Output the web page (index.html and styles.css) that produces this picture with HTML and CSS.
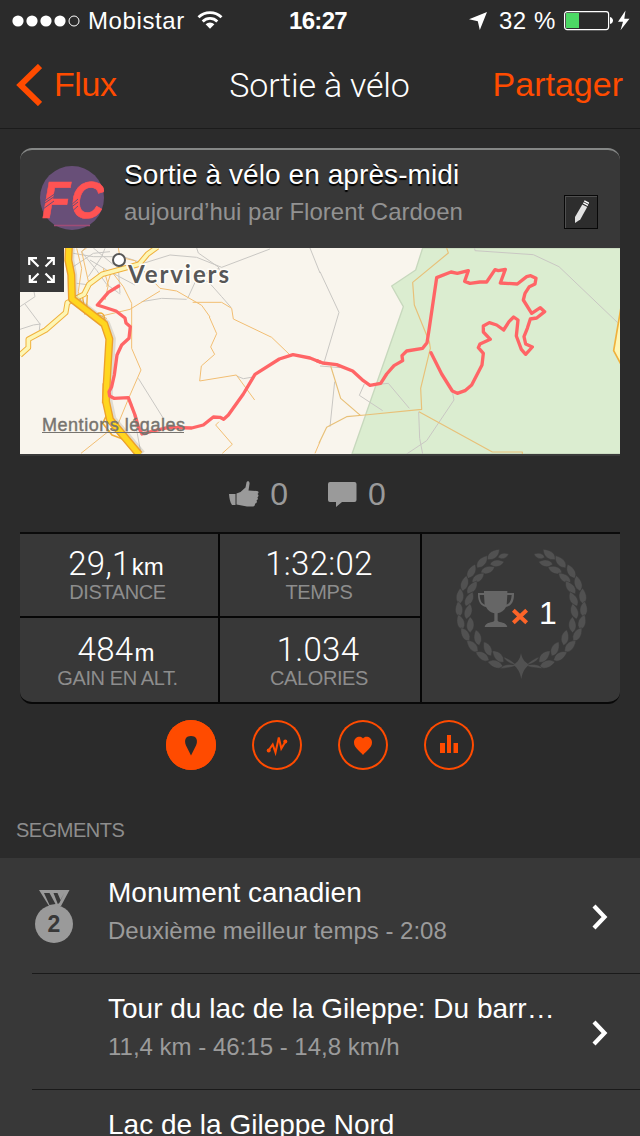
FILE: index.html
```
<!DOCTYPE html>
<html lang="fr">
<head>
<meta charset="utf-8">
<title>Sortie à vélo</title>
<link rel="stylesheet" href="styles.css">
</head>
<body>
<div class="screen">
  <header class="status">
    <div class="status-left">
      <svg class="signal" width="68" height="12" viewBox="0 0 68 12"><g fill="#fff"><circle cx="6" cy="6" r="5.6"/><circle cx="20" cy="6" r="5.6"/><circle cx="34" cy="6" r="5.6"/><circle cx="48" cy="6" r="5.6"/></g><circle cx="62" cy="6" r="5" fill="none" stroke="#fff"/></svg>
      <span class="carrier">Mobistar</span>
      <svg class="wifi" width="26" height="20" viewBox="0 0 26 20"><g fill="none" stroke="#fff" stroke-width="2.8"><path d="M1.5 6.200a16.6 16.6 0 0 1 23 0"/><path d="M5.7 10.400a10.5 10.5 0 0 1 14.6 0"/></g><path d="M8.600 13.200a6.400 6.400 0 0 1 8.800 0L13 17.700z" fill="#fff"/></svg>
    </div>
    <span class="clock">16:27</span>
    <div class="status-right">
      <svg width="20" height="20" viewBox="0 0 20 20"><path d="M19 1 11.800 19 9.800 10.200 1 8.300z" fill="#fff"/></svg>
      <span class="percent">32 %</span>
      <svg class="battery" width="66" height="22" viewBox="0 0 66 22"><rect x=".6" y="1.600" width="44" height="18" rx="2.500" fill="none" stroke="#fff" stroke-width="1.200"/><path d="M2 3h13v15H2z" fill="#4cd964"/><path d="M46 7c4 1 4 6 0 7z" fill="#fff"/><path d="m61.500 .5-7.500 11.200h5l-2.500 8.500 9-11.500h-5.200z" fill="#fff"/></svg>
    </div>
  </header>

  <nav class="nav">
    <span class="back"><svg width="26" height="42" viewBox="0 0 26 42"><path d="M24 2 4.500 21 24 40" fill="none" stroke="#ff4b00" stroke-width="6"/></svg>Flux</span>
    <h1 class="nav-title">Sortie à vélo</h1>
    <span class="share">Partager</span>
  </nav>

  <main>
    <section class="card">
      <div class="card-head">
        <svg class="avatar" width="64" height="64" viewBox="0 0 64 64">
          <circle cx="32" cy="32" r="32" fill="#684f78"/>
          <text class="monogram" x="2" y="51.500" textLength="62" lengthAdjust="spacingAndGlyphs">FC</text>
          <g stroke="#684f78" stroke-width="1"><path d="m2 39 13-9M3 36l13-9M3 43l11-8M30 40l8-7M29 43l9-7M30 47l8-7"/></g>
          <path d="M14 59.500h36" stroke="#a04c76" stroke-width="1.300"/>
        </svg>
        <div class="card-text">
          <h2 class="activity">Sortie à vélo en après-midi</h2>
          <p class="byline">aujourd’hui par Florent Cardoen</p>
        </div>
        <span class="edit"><svg width="16" height="24" viewBox="0 0 16 24"><path d="M9.300 4.500 14.200 7 7.300 19.500 2 23l0-6z" fill="#e2e2e2"/><path d="M10.300 2.900 15 5.300M11.300 .9l4.700 2.400" stroke="#fff" stroke-width="1.500"/></svg></span>
      </div>

      <div class="map">
        <svg class="map-canvas" width="600" height="206" viewBox="20 248 600 206">
          <path d="M20 248h600v206H20z" fill="#f9f5ed"/>
          <g transform="translate(10 240) scale(.33333)" fill="none" stroke-linejoin="round">
            <g stroke="#c9c7c3" stroke-width="3">
              <path d="M30 200 45 190 75 170 72 155M45 192l45 60-2 18M30 268l40-13 22-3M190 40l60 10 90 0 60 20 80-25 80 7 75 30 145-55M560 24l5 15 60 42 5 15M628 85l-65 25-30 65M565 115l30 10 40 45 28 32M900 24l30 75M200 130l40 5M225 24l-10 12 45 55 30 42 35 25 5 5M250 24l60 50M240 60l50 30 85 45M325 80l5 80M395 185l60-10 75 3M385 415l75 120M365 490l27 145M680 408l20 8 30-5M190 80l60-40 50-5M235 110l40-60 10-25"/>
            </g>
            <g stroke="#f2be72" stroke-width="3">
              <path d="m325 24 5 28 45 10 25 30 50 53 50 8 75 43 25 35-2 0 22 50-18 40 12 22-40 35-5 45 110-18 55 75M548 187h87l30 18 5 32 115 55 52 50M275 228l85-20 90-55M365 325V190l-25-50-35-45M365 325l28 65-35 80-35 85-10 5-100 80M627 545l-10 10 50 58-30 27M930 605l-15 35M200 25l15 60-10 70 20 70M230 24l-15 10 20 90 50-20M280 85l15 50-10 45M245 215l45 20-15 12M305 90l-15 50"/>
            </g>
            <g stroke="#f0b13c" stroke-width="17">
              <path d="m30 345 25-22v-25l52-28 60-52 5-30 50-25 15-30 40-30 110-30 25-30 30-22"/>
            </g>
            <g stroke="#fdf6b5" stroke-width="11">
              <path d="m30 345 25-22v-25l52-28 60-52 5-30 50-25 15-30 40-30 110-30 25-30 30-22"/>
            </g>
            <path d="m218 172 4 26M232 165l-2 38" stroke="#f0b13c" stroke-width="4"/>
            <circle cx="270" cy="232" r="13" stroke="#f0ad35" stroke-width="4"/>
            <path d="m290 525-12 25 28 35 40 15M280 430l-2 60" stroke="#f0ad35" stroke-width="5"/>
            <path d="m180 15-2 45 9 45 2 72 97 75 17 45-8 137-2 50 12 55 88 105" stroke="#7a736333" stroke-width="29"/>
            <path d="m177 15-2 45 9 45 2 72 97 75 15 45-8 137-2 50 12 55 88 105" stroke="#eda02b" stroke-width="24"/>
            <path d="m177 15-2 45 9 45 2 72 97 75 15 45-8 137-2 50 12 55 88 105" stroke="#ffd61f" stroke-width="16"/>
          </g>
          <g transform="translate(320 240) scale(.33333)" fill="none" stroke-linejoin="round">
            <path d="M308 24 287 90l-72 48 35 62L96 642h810V24z" fill="#dbedd0" stroke="#c7d8bd" stroke-width="4"/>
            <g stroke="#c9c7c3" stroke-width="3">
              <path d="m0 95 57 122L13 365M44 425 30 560M133 432l-15 34 70 46M185 432l20-2 63 75M463 20l2 12 175 12 77 36 176 168M398 460l4 20-82 122-60 40M296 515l3 80 9 47M0 378l60 5"/>
            </g>
            <g stroke="#e8c078" stroke-width="3.500">
              <path d="m380 24 5 15-107 88 5 68 45 110 3 20-29 120 3 63-170 17-55 5-60 32-23 48M32 378l30 97 60 52M297 515l220 121h90v6"/>
            </g>
            <path d="m905 190-24 142 24 45" fill="#fdf6b5" stroke="#f0b13c" stroke-width="5"/>
          </g>
          <g fill="none" stroke="#ff6566" stroke-width="10" stroke-linejoin="round" stroke-linecap="round">
            <path transform="translate(10 240) scale(.33333)" d="M326 138 295 157 262 195 318 213 345 234 348 249 361 260 357 295 335 315 321 345 313 405 305 440 297 455 299 468 312 475 355 473 375 525 385 560 396 582 430 573 475 562 545 564 580 555 610 531 630 532 641 538 655 525 700 462 735 403 808 357 849 344 900 354 930 366"/>
            <path transform="translate(320 240) scale(.33333)" d="M-10 362 8 369 50 374 98 393 130 422 150 436 182 430 200 402 222 377 248 362 246 347 260 333 308 325 321 308 327 270 350 113 393 96 412 100 445 92 434 124 450 130 480 126 500 126 525 89 535 92 556 88 541 129 592 132 620 110 632 107 648 115 645 132 628 140 615 160 610 180 635 220 661 203 674 215 650 234 631 237 622 265 612 290 617 312 637 321 617 343 604 328 589 288 594 240 581 231 567 245 551 270 530 255 508 248 490 258 490 276 511 298 480 312 475 323 490 340 486 375 455 435 435 452 412 460 397 453 365 402 333 338"/>
          </g>
          <circle cx="119" cy="260" r="6" fill="#fff" stroke="#575757" stroke-width="2"/>
          <text class="city" x="128" y="282.500" textLength="101">Verviers</text>
          <text class="legal" x="42" y="431" textLength="143">Mentions légales</text>
          <path d="M42 432.500h142" stroke="#77746f"/>
        </svg>
        <span class="expand"><svg width="28" height="28" viewBox="0 0 28 28"><path d="M10.500 10.500 2 2M1.200 9V2.200H9M17.500 10.500 26 2M19 2.200h6.800V9M10.500 17.500 2 26M1.800 19v6.800H9M17.500 17.500 26 26M19 25.800h6.800V19" fill="none" stroke="#fff" stroke-width="2.200"/></svg></span>
      </div>

      <div class="social">
        <span class="social-item like"><svg width="30" height="27" viewBox="0 0 30 27"><path d="M0 13h6.500v11H3C1 21 .5 18 0 13zM7.500 12.500l4-1.500 5-4.500 1-5C18-.5 21-.5 20.500 3L19.500 9.500l8.500.5c2 .3 2 2.500.5 3 1.500.7 1.200 3-.2 3.200 1 .8.700 3-.8 3.200 1 1 0 3-1.500 3.200.2 2-1 3-3 3H18L7.500 23.500z" fill="#9a9a9a"/></svg><span>0</span></span>
        <span class="social-item"><svg width="29" height="27" viewBox="0 0 29 27"><path d="M2 1h24.500a2 2 0 0 1 2 2v16a2 2 0 0 1-2 2H14l-6 5v-5H2a2 2 0 0 1-2-2V3a2 2 0 0 1 2-2z" fill="#9a9a9a"/></svg><span>0</span></span>
      </div>

      <div class="stats">
        <div class="stat"><div class="value">29,1<small>km</small></div><div class="label">DISTANCE</div></div>
        <div class="stat"><div class="value">1:32:02</div><div class="label">TEMPS</div></div>
        <div class="stat low"><div class="value">484<small>m</small></div><div class="label">GAIN EN ALT.</div></div>
        <div class="stat low"><div class="value">1.034</div><div class="label">CALORIES</div></div>
        <div class="trophies">
          <svg width="160" height="150" viewBox="0 0 480 450">
            <defs>
              <path id="leaf" d="M1-24C12-14 15 0 9 13L0 24C-13 15-15-3 1-24z"/>
              <g id="branch">
                <use href="#leaf" transform="translate(160 43) rotate(48)"/><use href="#leaf" transform="translate(126 65) rotate(38)"/><use href="#leaf" transform="translate(94 94) rotate(25)"/><use href="#leaf" transform="translate(73 130) rotate(12)"/><use href="#leaf" transform="translate(59 169) rotate(0)"/><use href="#leaf" transform="translate(56 208) rotate(-8)"/><use href="#leaf" transform="translate(61 247) rotate(-20)"/><use href="#leaf" transform="translate(75 284) rotate(-34)"/><use href="#leaf" transform="translate(97 319) rotate(-47)"/><use href="#leaf" transform="translate(127 349) rotate(-60)"/><use href="#leaf" transform="translate(166 373) rotate(-76)"/>
                <use href="#leaf" transform="translate(190 47) rotate(70) scale(.7)"/><use href="#leaf" transform="translate(171 69) rotate(78) scale(.9)"/><use href="#leaf" transform="translate(143 89) rotate(66) scale(.95)"/><use href="#leaf" transform="translate(114 113) rotate(50) scale(.95)"/><use href="#leaf" transform="translate(96 142) rotate(35)"/><use href="#leaf" transform="translate(87 177) rotate(24)"/><use href="#leaf" transform="translate(84 214) rotate(12)"/><use href="#leaf" transform="translate(90 254) rotate(-2)"/><use href="#leaf" transform="translate(112 293) rotate(-14)"/><use href="#leaf" transform="translate(142 327) rotate(-29)"/><use href="#leaf" transform="translate(174 350) rotate(-47)"/>
                <path d="M190 351c14 3 25 12 40 24-14-2-32-9-40-24zM180 386c8-11 22-15 50-11-12 9-34 8-50 11z"/>
              </g>
            </defs>
            <g fill="#515151" stroke="#383838" stroke-width="1.500"><use href="#branch"/><use href="#branch" transform="translate(488 0) scale(-1 1)"/><path stroke="none" d="M243 339c3 17 10 26 24 35-14 11-20 24-23 43-4-20-10-32-24-43 14-8 20-17 23-35z"/></g>
            <path d="M132 153h70v6h20c1 25-7 39-24 42-6 11-14 17-25 19v22c4 7 27 3 29 19h-68c2-16 25-12 29-19v-22c-11-2-19-8-25-19-17-3-25-17-24-42h18zm0 12h-13c1 16 5 25 15 29zm70 0-2 29c10-4 14-13 15-29z" fill="#666"/>
            <path d="m220 211 40 37m0-37-40 37" stroke="#fc6428" stroke-width="12"/>
            <text class="count" x="297" y="251">1</text>
          </svg>
        </div>
      </div>
    </section>

    <div class="tabs">
      <span class="tab active"><svg width="50" height="50" viewBox="0 0 50 50"><path d="M25 35.500 20 25.500C18 21 19 16 25 16s7 5 5 9.500z" fill="#2b2b2b"/></svg></span>
      <span class="tab"><svg width="50" height="50" viewBox="0 0 50 50"><path d="m16.500 30.500 4.200-6 2.800 8 3.300-15 2.500 11 4.500-7.500" fill="none" stroke="#ff4b00" stroke-width="2"/><g fill="#ff4b00"><circle cx="16.700" cy="30.500" r="2"/><circle cx="33.300" cy="21.500" r="2"/></g></svg></span>
      <span class="tab"><svg width="50" height="50" viewBox="0 0 50 50"><path d="M25 35c-3-4-9-7-9-12.500 0-6 7-7 9-4 2-3 9-2 9 4C34 28 28 31 25 35z" fill="#ff4b00"/></svg></span>
      <span class="tab"><svg width="50" height="50" viewBox="0 0 50 50"><path d="M16 23h5v10h-5zM23 15h4v18h-4zM29.500 23h4.500v10h-4.500z" fill="#ff4b00"/></svg></span>
    </div>

    <section class="segments">
      <h3 class="segments-title">SEGMENTS</h3>
      <ul class="list">
        <li class="row">
          <svg class="medal" width="40" height="56" viewBox="0 0 40 56"><path d="M4 1h30.500L26 17H14z" fill="#9a9a9a"/><path d="M9 4h5.500l6 11-6 1zM18.500 4h4l3 7 3.800-7-5 10-1.500 1z" fill="#383838"/><circle cx="19" cy="35" r="19" fill="#9a9a9a"/><text class="rank" x="19" y="43" text-anchor="middle">2</text></svg>
          <div class="row-text"><h4 class="name">Monument canadien</h4><p class="detail">Deuxième meilleur temps - 2:08</p></div>
          <svg class="chevron" width="16" height="26" viewBox="0 0 16 26"><path d="m2 2 10.500 11L2 24" fill="none" stroke="#fff" stroke-width="4.200"/></svg>
        </li>
        <li class="row">
          <div class="row-text"><h4 class="name">Tour du lac de la Gileppe: Du barr…</h4><p class="detail">11,4 km - 46:15 - 14,8 km/h</p></div>
          <svg class="chevron" width="16" height="26" viewBox="0 0 16 26"><path d="m2 2 10.500 11L2 24" fill="none" stroke="#fff" stroke-width="4.200"/></svg>
        </li>
        <li class="row">
          <div class="row-text"><h4 class="name">Lac de la Gileppe Nord</h4></div>
        </li>
      </ul>
    </section>
  </main>
</div>
</body>
</html>
```
FILE: styles.css
```
* { box-sizing: border-box; margin: 0; padding: 0; }
body { background: #2b2b2b; }
svg { display: block; flex: none; }
h1, h2, h3, h4 { font-weight: 400; }

.screen {
  width: 640px;
  height: 1136px;
  overflow: hidden;
  background: #2b2b2b;
  color: #fff;
  font-family: "Liberation Sans", Arial, sans-serif;
}

.status {
  display: grid;
  grid-template-columns: 1fr auto 1fr;
  align-items: center;
  height: 41px;
  padding: 0 10px 0 12px;
  font-size: 24px;
  line-height: 40px;
}
.status-left, .status-right { display: flex; align-items: center; }
.carrier { margin-left: 8px; letter-spacing: .6px; }
.wifi { margin-left: 12px; }
.clock { margin: 0 5px 0 -1px; font-weight: 700; letter-spacing: -.7px; }
.status-right { justify-content: flex-end; }
.percent { margin: 0 8px 0 11px; letter-spacing: .6px; }

.nav {
  display: grid;
  grid-template-columns: 1fr auto 1fr;
  align-items: center;
  height: 88px;
  padding: 0 17px 0 16px;
  border-bottom: 1px solid #1b1b1b;
  color: #ff4b00;
  font-size: 34px;
}
.back { display: flex; align-items: center; gap: 12px; letter-spacing: -.4px; }
.nav-title { color: #fff; font: 300 34px Roboto, sans-serif; letter-spacing: -.2px; }
.share { text-align: right; }

.card {
  margin: 19px 20px 0;
  border-top: 2px solid #858786;
  border-bottom: 2px solid #080808;
  border-radius: 12px;
  overflow: hidden;
  background: #383838;
}
.card-head { display: flex; height: 98px; padding: 5px 22px 0 20px; }
.avatar { margin-top: 11px; }
.monogram { fill: #ff5353; stroke: #ff5353; stroke-width: .6px; font: italic 700 51px "Liberation Sans", sans-serif; }
.card-text { flex: 1; margin-left: 20px; }
.activity { font-size: 28px; line-height: 40px; letter-spacing: .08px; text-shadow: 0 2px 1px #000; }
.byline { margin-top: -1px; color: #929292; font-size: 24px; line-height: 36px; }
.edit {
  display: grid;
  place-items: center;
  width: 34px;
  height: 34px;
  margin-top: 40px;
  border: 1px solid #080808;
  background: #2d2d2d;
  box-shadow: inset 1px 1px #505050;
}

.map { position: relative; height: 206px; }
.expand {
  position: absolute;
  top: 0;
  left: 0;
  display: grid;
  place-items: center;
  width: 44px;
  height: 44px;
  background: #383838;
}
.city { font: 700 24px Lato, sans-serif; fill: #575757; stroke: #fffdf8; stroke-width: 3px; paint-order: stroke; }
.legal { font-size: 18px; fill: #77746f; stroke: #77746f; stroke-width: .4px; }

.social {
  display: flex;
  justify-content: center;
  gap: 40px;
  height: 80px;
  padding-right: 25px;
  border-top: 2px solid #3b3b3b;
  border-bottom: 2px solid #0b0b0b;
  background: #2b2b2b;
  color: #9a9a9a;
  font-size: 32px;
  line-height: 76px;
}
.social-item { display: flex; align-items: center; gap: 11px; }

.stats {
  display: grid;
  grid-template-columns: 198px 200px 198px;
  grid-template-rows: 82px 84px;
  gap: 2px;
  background: #060606;
  text-align: center;
}
.stat { padding-top: 13px; background: #383838; }
.low { padding-top: 15px; }
.value { height: 34px; font: 300 33px/34px Roboto, sans-serif; letter-spacing: .3px; }
.value small { margin-left: 1px; font: 24px/1 "Liberation Sans", sans-serif; letter-spacing: 0; }
.label { color: #8d8d8d; font-size: 20px; line-height: 22px; letter-spacing: -.4px; }
.stat:nth-child(odd) .label { padding-right: 3px; }
.stat:nth-child(odd) .value { padding-right: 6px; }
.stat:nth-child(even) .label { padding-right: 2px; }
.stat:nth-child(even) .value { padding-right: 2px; }
.low:nth-child(even) .value { padding-right: 4px; }
.trophies {
  grid-column: 3;
  grid-row: 1 / 3;
  padding: 6px 0 0 18px;
  background: #383838;
}
.count { fill: #fff; font: 96px "Liberation Sans", sans-serif; }

.tabs { display: flex; justify-content: center; gap: 36px; padding-top: 16px; }
.tab { width: 50px; height: 50px; border-radius: 50%; box-shadow: inset 0 0 0 2px #ff4b00; }
.active { background: #ff4b00; }

.segments-title {
  height: 88px;
  padding: 49px 16px 0;
  color: #8d8d8d;
  font-size: 20px;
  line-height: 22px;
  letter-spacing: -.5px;
}
.list { list-style: none; background: #383838; }
.row { display: flex; height: 116px; padding-left: 35px; background: linear-gradient(#1a1a1a, #1a1a1a) 32px 115px / 608px 1px no-repeat; }
.medal { margin: 31px -2px 0 0; }
.row-text { width: 484px; margin-left: 35px; padding-top: 17px; white-space: nowrap; }
.row-text:first-child { margin-left: 73px; }
.name { font-size: 28px; line-height: 36px; }
.detail { margin-top: -1px; color: #9b9b9b; font-size: 24px; line-height: 41px; }
.chevron { margin-top: 46px; }
.rank { fill: #383838; font: 700 23px "Liberation Sans", sans-serif; }
```
